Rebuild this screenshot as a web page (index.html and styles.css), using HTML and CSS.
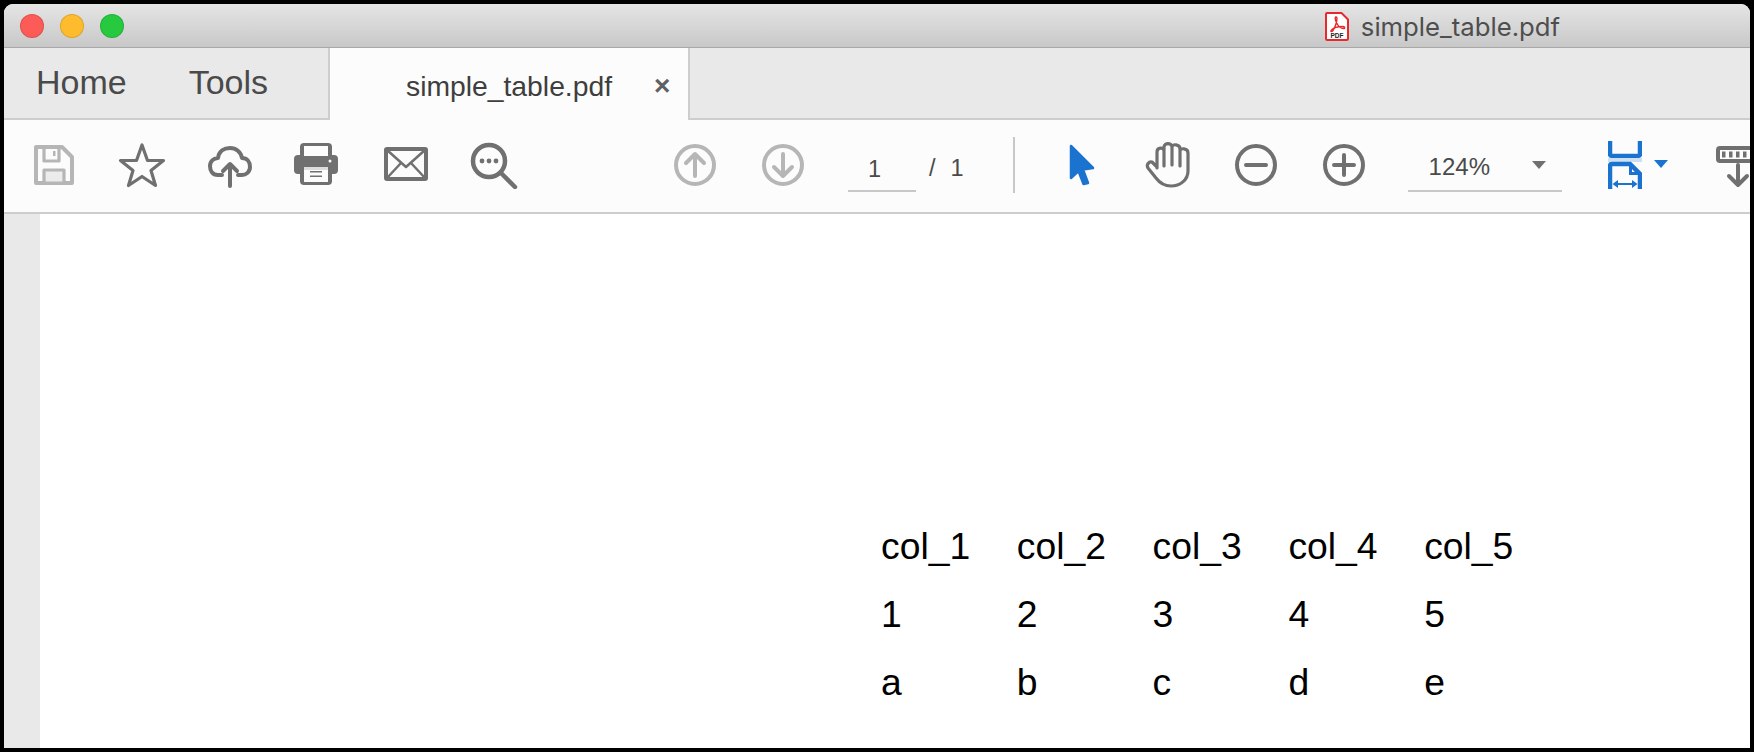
FILE: index.html
```html
<!DOCTYPE html>
<html lang="en">
<head>
<meta charset="utf-8">
<title>simple_table.pdf</title>
<link rel="stylesheet" href="styles.css">
</head>
<body>
<div class="window">
  <header class="titlebar">
    <div class="lights">
      <span class="light red"></span>
      <span class="light yellow"></span>
      <span class="light green"></span>
    </div>
    <div class="doc-title">
      <svg class="pdf-icon" width="24" height="29" viewBox="0 0 24 29">
        <path class="pdf-sheet" d="M2 1H16.500L23 7.500V26.500Q23 28 21.500 28H2.500Q1 28 1 26.500V2Q1 1 2 1Z"/>
        <path class="pdf-swirl" d="M11 5C9.500 5 10.500 9.500 12.500 12.500C14 15 16 16.500 18.500 16.500C20.500 16.500 20 14.500 17.500 14.500C14 14.500 9 15.500 6.500 18C5 19.500 6.500 20.500 8 18.500C10 16 12 9 12 6.500C12 5.500 11.500 5 11 5Z"/>
        <text class="pdf-label" x="12" y="26">PDF</text>
      </svg>
      <span class="doc-name">simple_table.pdf</span>
    </div>
  </header>

  <nav class="tabbar">
    <div class="nav-links">
      <span class="nav-home">Home</span>
      <span class="nav-tools">Tools</span>
    </div>
    <div class="doc-tab">
      <span class="doc-tab-name">simple_table.pdf</span>
      <span class="doc-tab-close">×</span>
    </div>
    <div class="tabbar-rest"></div>
  </nav>

  <div class="toolbar">
    <div class="tool-group file-tools">
      <svg class="tool" viewBox="0 0 48 48">
        <path class="s-muted" d="M6 6H32L42 16V42H6Z"/>
        <path class="s-muted thin" d="M14 6V20H29V6"/>
        <rect class="muted-fill" x="23" y="10" width="2.500" height="5"/>
        <rect class="s-muted thin light-fill" x="14" y="29" width="20" height="13"/>
      </svg>
      <svg class="tool" viewBox="0 0 48 48">
        <path class="s-dark thin" d="M24 4L29.500 19.500H45.500L33 29.500L37.500 44.500L24 35.500L10.500 44.500L15 29.500L2.500 19.500H18.500Z"/>
      </svg>
      <svg class="tool" viewBox="0 0 48 48">
        <path class="s-dark" d="M16 34H12C6 34 4 29 4 25C4 20 8 17 12 17C13 10 18 7 24 7C30 7 35 11 36 17C41 17 44 21 44 26C44 31 40 34 36 34H32"/>
        <path class="s-dark" d="M24 45V24M17 30L24 23L31 30"/>
      </svg>
      <svg class="tool" viewBox="2 0 48 48">
        <rect class="dark-fill" x="8" y="2" width="32" height="42" rx="4"/>
        <rect class="dark-fill" x="2" y="14" width="44" height="19" rx="4"/>
        <rect class="white-fill" x="12" y="5" width="24" height="10"/>
        <rect class="white-fill" x="12" y="26" width="24" height="15"/>
        <rect class="strip-fill" x="12" y="26" width="24" height="3"/>
        <rect class="dark-fill" x="18" y="30" width="12" height="1.500"/>
        <rect class="dark-fill" x="18" y="34.500" width="12" height="1.500"/>
        <circle class="white-fill" cx="38" cy="20" r="1.500"/>
      </svg>
      <svg class="tool" viewBox="0 0 48 48">
        <rect class="s-dark" x="4" y="8" width="40" height="30" rx="1"/>
        <path class="s-dark hair" d="M5 9L24 26L43 9M5 37L19 22M43 37L29 22"/>
      </svg>
      <svg class="tool" viewBox="0 0 48 48">
        <circle class="s-dark bold" cx="19" cy="20" r="16"/>
        <path class="s-dark bold" d="M32 33L45 46"/>
        <circle class="dark-fill" cx="12" cy="20" r="2.400"/>
        <circle class="dark-fill" cx="19" cy="20" r="2.400"/>
        <circle class="dark-fill" cx="26" cy="20" r="2.400"/>
      </svg>
    </div>

    <div class="tool-group page-tools">
      <svg class="tool" viewBox="0 0 48 48">
        <circle class="s-muted" cx="24" cy="24" r="19"/>
        <path class="s-muted" d="M24 35V14M15 22L24 13L33 22"/>
      </svg>
      <svg class="tool" viewBox="0 0 48 48">
        <circle class="s-muted" cx="24" cy="24" r="19"/>
        <path class="s-muted" d="M24 13V34M15 26L24 35L33 26"/>
      </svg>
    </div>

    <div class="pager">
      <span class="page-field">1</span>
      <span class="page-slash">/</span>
      <span class="page-total">1</span>
    </div>
    <div class="separator"></div>

    <div class="tool-group view-tools">
      <svg class="tool" viewBox="0 0 48 48">
        <path class="cursor" d="M15 5L37 27L27 28.500L32 42L27.500 43L22.500 30L15 37Z"/>
      </svg>
      <svg class="tool" viewBox="0 0 48 48">
        <path class="s-dark thin" d="M13 27V11C13 6 20 6 20 10V25M20 10V6C20 1.500 28 1.500 28 6V24M28 6C28 2.500 36 3 36 8V25M36 10C36 6.500 44 7 44 12V30C44 39 36 45 27 45C19 45 15 41 12 37L4 27C2 24 5 20 8 21L13 26"/>
      </svg>
      <svg class="tool" viewBox="0 0 48 48">
        <circle class="s-dark" cx="24" cy="24" r="19"/>
        <path class="s-dark" d="M14 24H34"/>
      </svg>
      <svg class="tool" viewBox="0 0 48 48">
        <circle class="s-dark" cx="24" cy="24" r="19"/>
        <path class="s-dark" d="M14 24H34M24 14V34"/>
      </svg>
    </div>

    <div class="zoom-select">
      <span>124%</span>
      <span class="caret caret-grey"></span>
    </div>

    <div class="fit-menu">
      <svg class="fit-icon" width="34" height="48" viewBox="0 0 34 48">
        <path class="s-blue" d="M2 0V13Q2 15 4 15H30Q32 15 32 13V0"/>
        <rect class="blue-strip" x="0" y="17" width="34" height="4"/>
        <path class="s-blue" d="M2 48V25Q2 23 4 23H22L32 33V48"/>
        <path class="blue-fill" d="M21 24H24V31H31V34H21Z"/>
        <path class="s-blue hair2" d="M8 43H26"/>
        <path class="blue-fill" d="M4.500 43L10 39V47ZM29.500 43L24 39V47Z"/>
      </svg>
      <span class="caret caret-blue"></span>
    </div>

    <svg class="tool last-tool" viewBox="0 0 48 48">
      <rect class="s-dark" x="2" y="7" width="44" height="13" rx="2"/>
      <rect class="dark-fill" x="6" y="10.500" width="3.500" height="6"/>
      <rect class="dark-fill" x="13" y="10.500" width="3.500" height="6"/>
      <rect class="dark-fill" x="20" y="10.500" width="3.500" height="6"/>
      <rect class="dark-fill" x="27" y="10.500" width="3.500" height="6"/>
      <path class="s-dark" d="M22 24V44M13 35L22 44L31 35"/>
    </svg>
  </div>

  <main class="viewer">
    <aside class="rail"></aside>
    <section class="page">
      <div class="pdf-table">
        <span>col_1</span><span>col_2</span><span>col_3</span><span>col_4</span><span>col_5</span>
        <span>1</span><span>2</span><span>3</span><span>4</span><span>5</span>
        <span>a</span><span>b</span><span>c</span><span>d</span><span>e</span>
      </div>
    </section>
  </main>
</div>
</body>
</html>
```

FILE: styles.css
```css
* {
  box-sizing: border-box;
}

html,
body {
  margin: 0;
  height: 100%;
  background: #000;
  overflow: hidden;
}

body {
  padding: 4px;
  font-family: "Liberation Sans", Arial, sans-serif;
}

.window {
  display: flex;
  flex-direction: column;
  height: 744px;
  background: #fff;
  border-radius: 9px 9px 0 0;
  overflow: hidden;
}

/* Title bar */
.titlebar {
  display: flex;
  align-items: center;
  flex: none;
  height: 44px;
  padding-left: 16px;
  background: linear-gradient(#e5e5e5, #c8c8c8);
  border-bottom: 1px solid #a8a8a8;
}

.lights {
  display: flex;
  gap: 16px;
  margin-top: 1px;
}

.light {
  width: 24px;
  height: 24px;
  border-radius: 50%;
  border: 1px solid rgba(0, 0, 0, 0.12);
}

.red { background: #fc5b57; }
.yellow { background: #fdbb2d; }
.green { background: #27c93f; }

.doc-title {
  display: flex;
  align-items: center;
  gap: 12px;
  margin-left: auto;
  margin-right: 190px;
  padding-top: 2px;
}

.pdf-icon {
  display: block;
}

.pdf-sheet {
  fill: #fff;
  stroke: #e8282d;
  stroke-width: 2;
}

.pdf-swirl {
  fill: none;
  stroke: #e8282d;
  stroke-width: 1.400;
}

.pdf-label {
  fill: #222;
  font-size: 6.500px;
  font-weight: 700;
  text-anchor: middle;
  font-family: "Liberation Sans", Arial, sans-serif;
}

.doc-name {
  font-family: "Inter", "Liberation Sans", sans-serif;
  font-size: 25.700px;
  color: #4e4e4e;
}

/* Tabs */
.tabbar {
  display: flex;
  flex: none;
  height: 72px;
  background: #e9e9e9;
}

.nav-links {
  display: flex;
  width: 324px;
  padding: 15px 0 0 32px;
  font-size: 34px;
  color: #4a4a4a;
  border-bottom: 2px solid #cdcdcd;
}

.nav-tools {
  margin-left: 62px;
}

.doc-tab {
  display: flex;
  width: 362px;
  padding: 22px 0 0 76px;
  background: #fcfcfc;
  border-left: 2px solid #cdcdcd;
  border-right: 2px solid #cdcdcd;
  font-size: 28.300px;
  color: #3e3e3e;
}

.doc-tab-close {
  margin-left: 42px;
  font-size: 28px;
  line-height: 32px;
  font-weight: 700;
  color: #606060;
}

.tabbar-rest {
  flex: 1;
  border-bottom: 2px solid #cdcdcd;
}

/* Toolbar */
.toolbar {
  display: flex;
  align-items: center;
  flex: none;
  height: 94px;
  padding-bottom: 2px;
  background: #fcfcfc;
  border-bottom: 2px solid #cdcdcd;
}

.tool-group {
  display: flex;
  gap: 40px;
  flex: none;
}

.tool {
  display: block;
  flex: none;
  width: 48px;
  height: 48px;
}

.file-tools { margin-left: 26px; }
.page-tools { margin-left: 153px; }
.view-tools { margin-left: 41px; }

.s-dark,
.s-muted,
.s-blue {
  fill: none;
  stroke-width: 4;
  stroke-linecap: round;
  stroke-linejoin: round;
}

.s-dark { stroke: #707070; }
.s-muted { stroke: #b6b6b6; }
.s-blue { stroke: #1b73d0; stroke-width: 4.500; stroke-linecap: butt; stroke-linejoin: miter; }

.thin { stroke-width: 3.200; }
.bold { stroke-width: 4.500; }
.hair { stroke-width: 2.500; }
.hair2 { stroke-width: 2; }

.dark-fill { fill: #707070; }
.muted-fill { fill: #b6b6b6; }
.white-fill { fill: #fcfcfc; }
.strip-fill { fill: #dcdcdc; }
.light-fill { fill: #ececec; }
.blue-fill { fill: #1b73d0; }
.blue-strip { fill: #cfe0f3; }

.cursor {
  fill: #1b73d0;
  stroke: #1b73d0;
  stroke-width: 2.500;
  stroke-linejoin: round;
}

/* Pager */
.pager {
  display: flex;
  align-items: center;
  flex: none;
  margin-left: 41px;
  font-size: 23.500px;
  color: #4a4a4a;
}

.page-field {
  width: 68px;
  height: 54px;
  padding: 18px 0 0 20px;
  border-bottom: 2px solid #c8c8c8;
}

.page-slash {
  margin-left: 13px;
  padding-top: 6px;
}

.page-total {
  margin-left: 15px;
  padding-top: 6px;
}

.separator {
  flex: none;
  width: 2px;
  height: 56px;
  margin-left: 49px;
  background: #c8c8c8;
}

/* Zoom */
.zoom-select {
  display: flex;
  align-items: center;
  justify-content: space-between;
  flex: none;
  width: 154px;
  height: 54px;
  margin-left: 40px;
  padding: 6px 16px 0 21px;
  font-size: 24px;
  color: #4a4a4a;
  border-bottom: 2px solid #c8c8c8;
}

.caret {
  display: block;
  width: 0;
  height: 0;
  border-left: 7px solid transparent;
  border-right: 7px solid transparent;
}

.caret-grey { border-top: 8px solid #707070; margin-bottom: 4px; }
.caret-blue { border-top: 8px solid #1b73d0; margin-bottom: 2px; }

.fit-menu {
  display: flex;
  align-items: center;
  gap: 12px;
  flex: none;
  margin-left: 46px;
}

.fit-icon {
  display: block;
}

.last-tool {
  margin-left: 48px;
}

/* Document */
.viewer {
  display: flex;
  flex: 1;
  min-height: 0;
}

.rail {
  flex: none;
  width: 36px;
  background: #e9e9e9;
}

.page {
  flex: 1;
  padding: 298px 0 0 841px;
  background: #fff;
}

.pdf-table {
  display: grid;
  grid-template-columns: repeat(5, 135.800px);
  grid-auto-rows: 68px;
  font-size: 37.300px;
  line-height: 68px;
  color: #000;
}
```
